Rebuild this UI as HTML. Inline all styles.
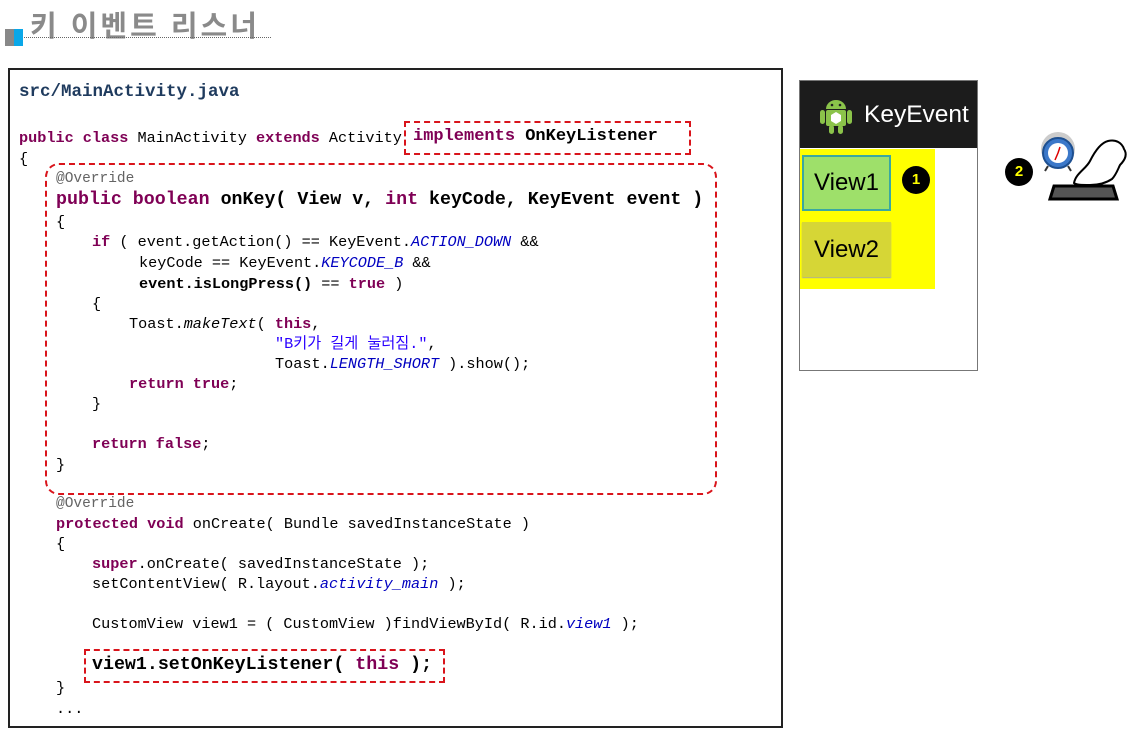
<!DOCTYPE html>
<html><head><meta charset="utf-8"><style>
body{margin:0;width:1135px;height:730px;background:#fff;position:relative;overflow:hidden;font-family:"Liberation Sans",sans-serif}
.l{position:absolute;white-space:pre;font-family:"Liberation Mono","Noto Sans CJK KR",monospace;font-size:15.2px;line-height:20px;color:#000;margin-top:2px}
.b{font-size:18.3px;font-weight:bold;line-height:22px}
.k{color:#7f0055;font-weight:bold}
.i{color:#0000c0;font-style:italic}
.a{color:#646464}
.s{color:#2a00ff}
.box{position:absolute;border:2px dashed #d9141b}
</style></head><body>
<div style="position:absolute;left:30px;top:3px;font-size:29px;font-weight:bold;color:#8a8a8a;font-family:'Liberation Sans','Noto Sans CJK KR',sans-serif;letter-spacing:3px">키 이벤트 리스너</div>
<div style="position:absolute;left:24px;top:37px;width:247px;border-top:1px dotted #666"></div>
<div style="position:absolute;left:5px;top:29px;width:9px;height:17px;background:#888"></div>
<div style="position:absolute;left:14px;top:29px;width:9px;height:17px;background:#0aa7e8"></div>

<div style="position:absolute;left:8px;top:68px;width:771px;height:656px;border:2px solid #222"></div>

<div class="l" style="left:19px;top:80px;color:#1f3b5e;font-weight:bold;font-size:17.5px">src/MainActivity.java</div>
<div class="l" style="left:19px;top:126px"><span class="k">public class</span> MainActivity <span class="k">extends</span> Activity</div>
<div class="l b" style="left:413px;top:124px;font-size:17px"><span class="k">implements</span> OnKeyListener</div>
<div class="box" style="left:404px;top:121px;width:283px;height:30px"></div>
<div class="l" style="left:19px;top:147px">{</div>
<div class="box" style="left:45px;top:163px;width:668px;height:328px;border-radius:14px"></div>
<div class="l a" style="left:56px;top:167px;font-size:14.5px">@Override</div>
<div class="l b" style="left:56px;top:187px"><span class="k">public boolean</span> onKey( View v, <span class="k">int</span> keyCode, KeyEvent event )</div>
<div class="l" style="left:56px;top:210px">{</div>
<div class="l" style="left:92px;top:230px"><span class="k">if</span> ( event.getAction() == KeyEvent.<span class="i">ACTION_DOWN</span> &amp;&amp;</div>
<div class="l" style="left:139px;top:251px">keyCode == KeyEvent.<span class="i">KEYCODE_B</span> &amp;&amp;</div>
<div class="l" style="left:139px;top:272px"><b>event.isLongPress()</b> == <span class="k">true</span> )</div>
<div class="l" style="left:92px;top:292px">{</div>
<div class="l" style="left:129px;top:312px">Toast.<i>makeText</i>( <span class="k">this</span>,</div>
<div class="l s" style="left:275px;top:332px">"B키가 길게 눌러짐."<span style="color:#000">,</span></div>
<div class="l" style="left:275px;top:352px">Toast.<span class="i">LENGTH_SHORT</span> ).show();</div>
<div class="l" style="left:129px;top:372px"><span class="k">return true</span>;</div>
<div class="l" style="left:92px;top:392px">}</div>
<div class="l" style="left:92px;top:432px"><span class="k">return false</span>;</div>
<div class="l" style="left:56px;top:453px">}</div>
<div class="l a" style="left:56px;top:492px;font-size:14.5px">@Override</div>
<div class="l" style="left:56px;top:512px"><span class="k">protected void</span> onCreate( Bundle savedInstanceState )</div>
<div class="l" style="left:56px;top:532px">{</div>
<div class="l" style="left:92px;top:552px"><span class="k">super</span>.onCreate( savedInstanceState );</div>
<div class="l" style="left:92px;top:572px">setContentView( R.layout.<span class="i">activity_main</span> );</div>
<div class="l" style="left:92px;top:612px">CustomView view1 = ( CustomView )findViewById( R.id.<span class="i">view1</span> );</div>
<div class="box" style="left:84px;top:649px;width:357px;height:30px"></div>
<div class="l b" style="left:92px;top:652px">view1.setOnKeyListener( <span class="k">this</span> );</div>
<div class="l" style="left:56px;top:676px">}</div>
<div class="l" style="left:56px;top:697px">...</div>

<div style="position:absolute;left:799px;top:80px;width:177px;height:289px;border:1px solid #777;background:#fff"></div>
<div style="position:absolute;left:800px;top:81px;width:177px;height:67px;background:#1c1c1c"></div>
<svg style="position:absolute;left:818px;top:97px" width="36" height="38" viewBox="0 0 36 38">
<rect x="8" y="13" width="20" height="16" rx="2" fill="#8bc34a"/>
<path d="M8 12a10 9 0 0 1 20 0z" fill="#8bc34a"/>
<rect x="2" y="13" width="5" height="14" rx="2.5" fill="#8bc34a"/><rect x="29" y="13" width="5" height="14" rx="2.5" fill="#8bc34a"/>
<rect x="11" y="28" width="5" height="9" rx="2.5" fill="#8bc34a"/><rect x="20" y="28" width="5" height="9" rx="2.5" fill="#8bc34a"/>
<circle cx="14" cy="8" r="1.3" fill="#222"/><circle cx="22" cy="8" r="1.3" fill="#222"/>
<path d="M13 18l5-3 5 3v6l-5 3-5-3z" fill="#fff"/></svg>
<div style="position:absolute;left:864px;top:101px;color:#fff;font-size:24.5px">KeyEvent</div>
<div style="position:absolute;left:800px;top:149px;width:135px;height:140px;background:#ffff00"></div>
<div style="position:absolute;left:802px;top:155px;width:85px;height:52px;background:#9ee06a;border:2px solid #3aa8a0;font-size:24px;line-height:52px;text-align:center">View1</div>
<div style="position:absolute;left:802px;top:222px;width:89px;height:55px;background:#d6d636;font-size:24px;line-height:55px;text-align:center;box-shadow:0 1px 1px #aa9">View2</div>
<div style="position:absolute;left:902px;top:166px;width:28px;height:28px;border-radius:50%;background:#000;color:#ff0;font-size:15px;font-weight:bold;text-align:center;line-height:28px">1</div>
<div style="position:absolute;left:1005px;top:158px;width:28px;height:28px;border-radius:50%;background:#000;color:#ff0;font-size:15px;font-weight:bold;text-align:center;line-height:28px">2</div>
<svg style="position:absolute;left:1038px;top:125px" width="97" height="78" viewBox="0 0 97 78">
<circle cx="20" cy="24" r="17" fill="#ccc"/>
<circle cx="20" cy="28" r="15" fill="#3b78c9" stroke="#1d4f90" stroke-width="2"/>
<circle cx="20" cy="28" r="10" fill="#fff"/>
<path d="M20 28l-3 7M20 28l2-6" stroke="#d00" stroke-width="1.5"/>
<path d="M10 41l-3 5M30 41l3 5" stroke="#333" stroke-width="2"/>
<path d="M12 74l4-13h59l4 13z" fill="#555" stroke="#000" stroke-width="3"/>
<path d="M36 58c2-10 12-14 16-22 4-8 10-18 18-20 8-2 14 2 16 8 4 6 0 12-4 16-2 4-4 10-8 14-6 4-14 6-22 6-8 0-14-0-16-2z" fill="#fff" stroke="#000" stroke-width="2"/>
</svg>
</body></html>
